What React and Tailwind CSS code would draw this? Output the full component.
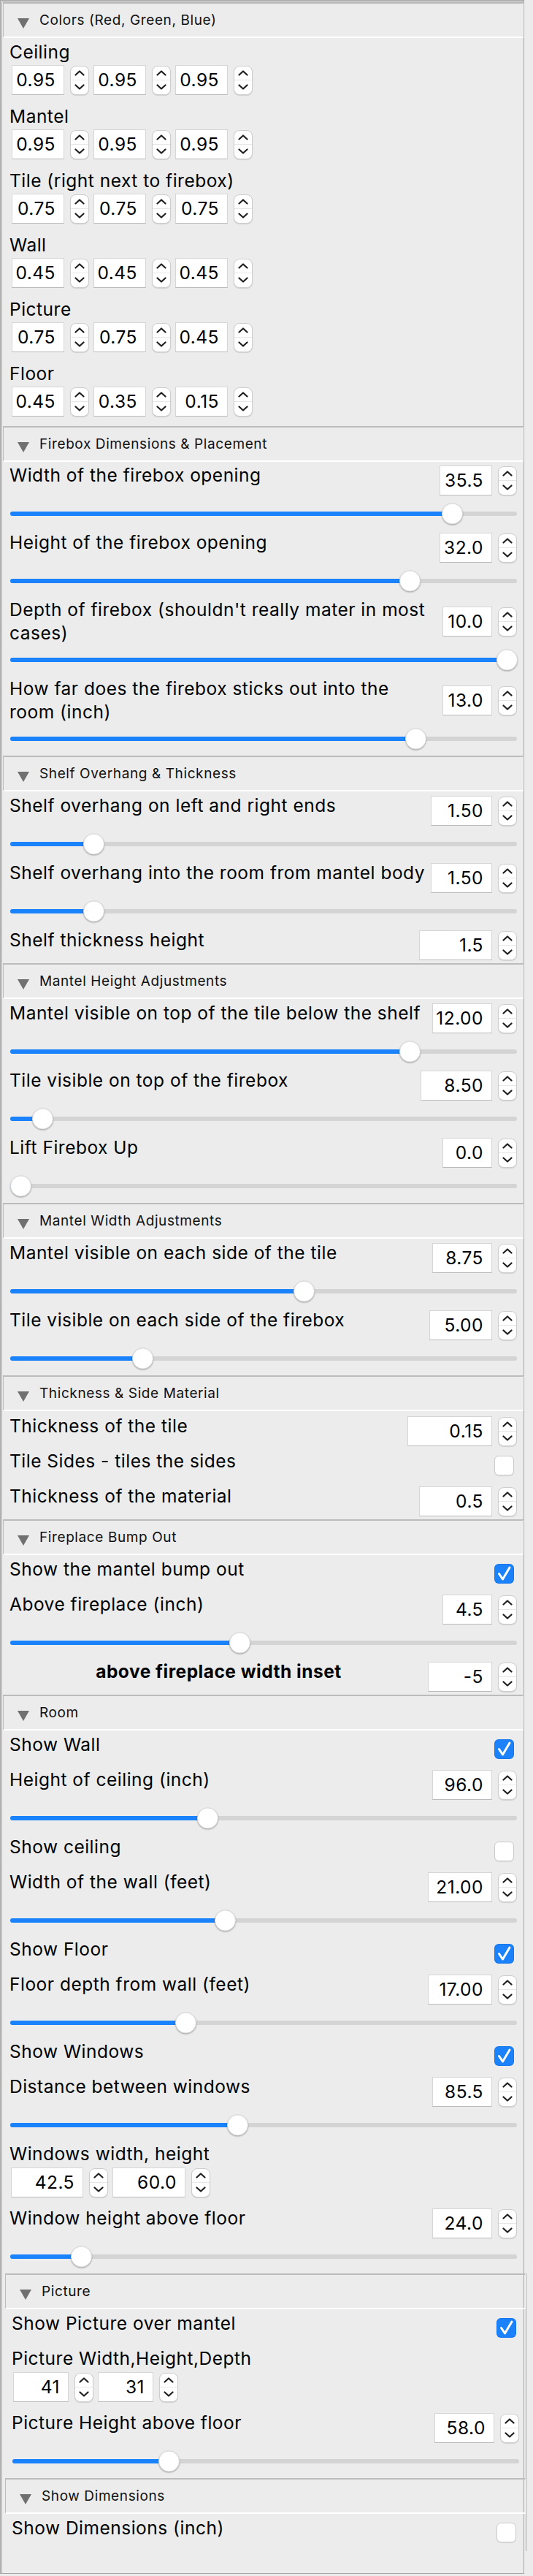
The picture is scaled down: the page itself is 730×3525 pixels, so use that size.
import React from "react";

function Chevron({ up }) {
  return (
    <svg width="14" height="8" viewBox="0 0 14 8" className="block">
      <path
        d={up ? "M1.5 6.5L7 1.5L12.5 6.5" : "M1.5 1.5L7 6.5L12.5 1.5"}
        fill="none"
        stroke="#1f1f1f"
        strokeWidth="2.2"
        strokeLinecap="round"
        strokeLinejoin="round"
      />
    </svg>
  );
}

function Spinner() {
  return (
    <div className="flex h-[40px] w-[26px] shrink-0 flex-col rounded-[8px] border border-[#cdcdcd] bg-white shadow-[0_1px_1px_rgba(0,0,0,0.12)]">
      <div className="flex flex-1 items-center justify-center border-b border-[#e6e6e6]">
        <Chevron up />
      </div>
      <div className="flex flex-1 items-center justify-center">
        <Chevron />
      </div>
    </div>
  );
}

function NumBox({ value, w }) {
  return (
    <div
      className={
        "h-[41px] shrink-0 border border-[#d6d6d6] border-b-[#bababa] bg-white pr-[11px] text-right text-[24.5px] leading-[39px] " +
        w
      }
    >
      {value}
    </div>
  );
}

function Field({ value, w }) {
  return (
    <div className="flex items-center gap-[8px]">
      <NumBox value={value} w={w} />
      <Spinner />
    </div>
  );
}

function Checkbox({ checked }) {
  if (checked) {
    return (
      <div className="flex h-[27px] w-[27px] items-center justify-center rounded-[6px] bg-[#1b82fb] shadow-[inset_0_0_0_1px_rgba(0,60,160,0.15)]">
        <svg width="27" height="27" viewBox="0 0 27 27" className="block">
          <path
            d="M6.5 13.5L11.5 21L21 5"
            fill="none"
            stroke="white"
            strokeWidth="3"
            strokeLinecap="round"
            strokeLinejoin="round"
          />
        </svg>
      </div>
    );
  }
  return (
    <div className="h-[27px] w-[27px] rounded-[6px] border border-[#cbcbcb] bg-white shadow-[0_1px_1px_rgba(0,0,0,0.08)]" />
  );
}

function Header({ title }) {
  return (
    <div className="ml-[1px] flex h-[49px] items-center border-t-2 border-l border-[#bcbcbc] border-b-2 border-r border-b-white border-r-white pl-[19px]">
      <svg width="16" height="14" viewBox="0 0 16 14" className="block translate-y-[4px]">
        <polygon points="0,0 16,0 8,14" fill="#707070" />
      </svg>
      <span className="ml-[14px] text-[19px] leading-[22px] tracking-[0.6px] text-[#111]">{title}</span>
    </div>
  );
}

function NumRow({ label, value, w, lines }) {
  const two = lines === 2;
  return (
    <div className={"flex items-start pl-[10px] pr-[9px] " + (two ? "h-[64px]" : "h-[48px]")}>
      <div className="min-w-0 flex-1 whitespace-nowrap text-[24.5px] leading-[32px]">{label}</div>
      <div className={two ? "mt-[12px]" : "mt-[3px]"}>
        <Field value={value} w={w} />
      </div>
    </div>
  );
}

function BoldRow({ label, value, w }) {
  return (
    <div className="flex h-[48px] items-start pl-[10px] pr-[9px]">
      <div className="min-w-0 flex-1 whitespace-nowrap text-center text-[24.5px] font-bold leading-[32px]">{label}</div>
      <div className="mt-[3px]">
        <Field value={value} w={w} />
      </div>
    </div>
  );
}

function CheckRow({ label, checked }) {
  return (
    <div className="flex h-[48px] items-start pl-[10px] pr-[13px]">
      <div className="min-w-0 flex-1 whitespace-nowrap text-[24.5px] leading-[32px]">{label}</div>
      <div className="mt-[9px]">
        <Checkbox checked={checked} />
      </div>
    </div>
  );
}

function Slider({ pos }) {
  return (
    <div className="h-[44px] pl-[11px] pr-[9px] pt-[18px]">
      <div className="relative h-[6px] rounded-full bg-[#d4d4d4]">
        <div className="absolute left-0 top-0 h-full rounded-full bg-[#1a82fb]" style={{ width: pos }} />
        <div
          className="absolute top-1/2 h-[29px] w-[29px] -translate-y-1/2 rounded-full border border-[#dadada] bg-white shadow-[0_1px_2px_rgba(0,0,0,0.3)]"
          style={{ left: pos - 14.5 }}
        />
      </div>
    </div>
  );
}

function Group({ label, fields, mt, ml }) {
  return (
    <div className="h-[88px] pl-[10px]">
      <div className="whitespace-nowrap text-[24.5px] leading-[32px]">{label}</div>
      <div className={"flex items-center gap-[6px] " + mt + " " + ml}>
        {fields.map((f, i) => (
          <Field key={i} value={f.v} w={f.w} />
        ))}
      </div>
    </div>
  );
}

function Section({ title, pt, children }) {
  return (
    <div>
      <Header title={title} />
      <div className={pt}>{children}</div>
    </div>
  );
}

const colorRows = [
  ["Ceiling", ["0.95", "0.95", "0.95"]],
  ["Mantel", ["0.95", "0.95", "0.95"]],
  ["Tile (right next to firebox)", ["0.75", "0.75", "0.75"]],
  ["Wall", ["0.45", "0.45", "0.45"]],
  ["Picture", ["0.75", "0.75", "0.45"]],
  ["Floor", ["0.45", "0.35", "0.15"]],
];

export default function App() {
  return (
    <div className="h-[3525px] w-[730px] bg-[#ececec] font-[family-name:Inter,'Noto_Sans',sans-serif] tracking-[0.5px] text-black antialiased">
      <div className="w-[718px] border-t-[3px] border-l-[3px] border-r border-b border-double border-[#a6a6a6] pb-[30px]">
        <Section title="Colors (Red, Green, Blue)" pt="pt-[3px]">
          {colorRows.map(([label, vals]) => (
            <Group
              key={label}
              label={label}
              mt="mt-[2px]"
              ml="ml-[3px]"
              fields={vals.map((v) => ({ v, w: "w-[72px]" }))}
            />
          ))}
        </Section>

        <Section title="Firebox Dimensions & Placement" pt="pt-[2px]">
          <NumRow label="Width of the firebox opening" value="35.5" w="w-[72px]" />
          <Slider pos={605} />
          <NumRow label="Height of the firebox opening" value="32.0" w="w-[72px]" />
          <Slider pos={547} />
          <NumRow
            lines={2}
            label={
              <>
                Depth of firebox (shouldn't really mater in most
                <br />
                cases)
              </>
            }
            value="10.0"
            w="w-[68px]"
          />
          <Slider pos={680} />
          <NumRow
            lines={2}
            label={
              <>
                How far does the firebox sticks out into the
                <br />
                room (inch)
              </>
            }
            value="13.0"
            w="w-[68px]"
          />
          <Slider pos={555} />
        </Section>

        <Section title="Shelf Overhang & Thickness" pt="pt-[3px]">
          <NumRow label="Shelf overhang on left and right ends" value="1.50" w="w-[84px]" />
          <Slider pos={114} />
          <NumRow label="Shelf overhang into the room from mantel body" value="1.50" w="w-[84px]" />
          <Slider pos={114} />
          <NumRow label="Shelf thickness height" value="1.5" w="w-[100px]" />
        </Section>

        <Section title="Mantel Height Adjustments" pt="pt-[3px]">
          <NumRow label="Mantel visible on top of the tile below the shelf" value="12.00" w="w-[82px]" />
          <Slider pos={547} />
          <NumRow label="Tile visible on top of the firebox" value="8.50" w="w-[98px]" />
          <Slider pos={44} />
          <NumRow label="Lift Firebox Up" value="0.0" w="w-[68px]" />
          <Slider pos={14} />
        </Section>

        <Section title="Mantel Width Adjustments" pt="pt-[3px]">
          <NumRow label="Mantel visible on each side of the tile" value="8.75" w="w-[82px]" />
          <Slider pos={402} />
          <NumRow label="Tile visible on each side of the firebox" value="5.00" w="w-[86px]" />
          <Slider pos={181} />
        </Section>

        <Section title="Thickness & Side Material" pt="pt-[4px]">
          <NumRow label="Thickness of the tile" value="0.15" w="w-[116px]" />
          <CheckRow label="Tile Sides - tiles the sides" checked={false} />
          <NumRow label="Thickness of the material" value="0.5" w="w-[100px]" />
        </Section>

        <Section title="Fireplace Bump Out" pt="pt-[3px]">
          <CheckRow label="Show the mantel bump out" checked />
          <NumRow label="Above fireplace (inch)" value="4.5" w="w-[68px]" />
          <Slider pos={314} />
          <BoldRow label="above fireplace width inset" value="-5" w="w-[88px]" />
        </Section>

        <Section title="Room" pt="pt-[3px]">
          <CheckRow label="Show Wall" checked />
          <NumRow label="Height of ceiling (inch)" value="96.0" w="w-[82px]" />
          <Slider pos={270} />
          <CheckRow label="Show ceiling" checked={false} />
          <NumRow label="Width of the wall (feet)" value="21.00" w="w-[88px]" />
          <Slider pos={294} />
          <CheckRow label="Show Floor" checked />
          <NumRow label="Floor depth from wall (feet)" value="17.00" w="w-[88px]" />
          <Slider pos={240} />
          <CheckRow label="Show Windows" checked />
          <NumRow label="Distance between windows" value="85.5" w="w-[82px]" />
          <Slider pos={311} />
          <Group
            label="Windows width, height"
            mt="mt-[3px]"
            ml="ml-[2px]"
            fields={[
              { v: "42.5", w: "w-[99px]" },
              { v: "60.0", w: "w-[100px]" },
            ]}
          />
          <NumRow label="Window height above floor" value="24.0" w="w-[82px]" />
          <Slider pos={97} />
        </Section>

        <div className="ml-[3px] -mr-[4px] border-r border-[#a6a6a6]">
          <Section title="Picture" pt="pt-[3px]">
            <CheckRow label="Show Picture over mantel" checked />
            <Group
              label="Picture Width,Height,Depth"
              mt="mt-[3px]"
              ml="ml-[2px]"
              fields={[
                { v: "41", w: "w-[76px]" },
                { v: "31", w: "w-[76px]" },
              ]}
            />
            <NumRow label="Picture Height above floor" value="58.0" w="w-[82px]" />
            <Slider pos={214} />
          </Section>

          <Section title="Show Dimensions" pt="pt-[3px]">
            <CheckRow label="Show Dimensions (inch)" checked={false} />
          </Section>
        </div>
      </div>
    </div>
  );
}
